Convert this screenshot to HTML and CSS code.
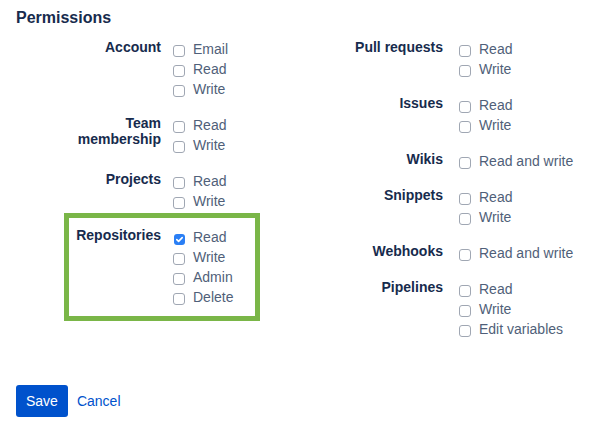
FILE: index.html
```html
<!DOCTYPE html>
<html>
<head>
<meta charset="utf-8">
<link rel="stylesheet" href="styles.css">
</head>
<body>
<div class="page">
  <h2 class="title">Permissions</h2>
  <div class="columns">
    <div class="col col-left">
      <div class="group">
        <div class="label">Account</div>
        <div class="opts">
          <div class="opt"><span class="cb"></span><span>Email</span></div>
          <div class="opt"><span class="cb"></span><span>Read</span></div>
          <div class="opt"><span class="cb"></span><span>Write</span></div>
        </div>
      </div>
      <div class="group">
        <div class="label">Team<br>membership</div>
        <div class="opts">
          <div class="opt"><span class="cb"></span><span>Read</span></div>
          <div class="opt"><span class="cb"></span><span>Write</span></div>
        </div>
      </div>
      <div class="group">
        <div class="label">Projects</div>
        <div class="opts">
          <div class="opt"><span class="cb"></span><span>Read</span></div>
          <div class="opt"><span class="cb"></span><span>Write</span></div>
        </div>
      </div>
      <div class="group highlighted">
        <div class="label">Repositories</div>
        <div class="opts">
          <div class="opt"><span class="cb checked"><svg viewBox="0 0 11 11" width="11" height="11"><path d="M2.8 5.6 L4.6 7.4 L8.2 3.6" fill="none" stroke="#fff" stroke-width="1.6" stroke-linecap="round" stroke-linejoin="round"/></svg></span><span>Read</span></div>
          <div class="opt"><span class="cb"></span><span>Write</span></div>
          <div class="opt"><span class="cb"></span><span>Admin</span></div>
          <div class="opt"><span class="cb"></span><span>Delete</span></div>
        </div>
      </div>
    </div>
    <div class="col col-right">
      <div class="group">
        <div class="label">Pull requests</div>
        <div class="opts">
          <div class="opt"><span class="cb"></span><span>Read</span></div>
          <div class="opt"><span class="cb"></span><span>Write</span></div>
        </div>
      </div>
      <div class="group">
        <div class="label">Issues</div>
        <div class="opts">
          <div class="opt"><span class="cb"></span><span>Read</span></div>
          <div class="opt"><span class="cb"></span><span>Write</span></div>
        </div>
      </div>
      <div class="group">
        <div class="label">Wikis</div>
        <div class="opts">
          <div class="opt"><span class="cb"></span><span>Read and write</span></div>
        </div>
      </div>
      <div class="group">
        <div class="label">Snippets</div>
        <div class="opts">
          <div class="opt"><span class="cb"></span><span>Read</span></div>
          <div class="opt"><span class="cb"></span><span>Write</span></div>
        </div>
      </div>
      <div class="group">
        <div class="label">Webhooks</div>
        <div class="opts">
          <div class="opt"><span class="cb"></span><span>Read and write</span></div>
        </div>
      </div>
      <div class="group">
        <div class="label">Pipelines</div>
        <div class="opts">
          <div class="opt"><span class="cb"></span><span>Read</span></div>
          <div class="opt"><span class="cb"></span><span>Write</span></div>
          <div class="opt"><span class="cb"></span><span>Edit variables</span></div>
        </div>
      </div>
    </div>
  </div>
  <div class="actions">
    <button class="btn-primary">Save</button>
    <a class="btn-link">Cancel</a>
  </div>
</div>
</body>
</html>
```

FILE: styles.css
```css
html, body {
  margin: 0;
  padding: 0;
  background: #ffffff;
}
body {
  font-family: "Liberation Sans", Arial, sans-serif;
  font-size: 14px;
  color: #172b4d;
}
.page {
  padding: 8px 16px 0 16px;
}
.title {
  margin: 0;
  font-size: 16px;
  line-height: 20px;
  font-weight: bold;
  color: #172b4d;
}
.columns {
  display: flex;
  margin-top: 11px;
}
.col {
  display: flex;
  flex-direction: column;
  gap: 16px;
}
.col-left {
  width: 284px;
  --lw: 145px;
  --lg: 12px;
}
.col-right {
  --lw: 143px;
  --lg: 16px;
}
.group {
  display: grid;
  grid-template-columns: var(--lw) auto;
  column-gap: var(--lg);
}
.label {
  text-align: right;
  font-weight: bold;
  line-height: 16px;
  color: #172b4d;
}
.opts {
  display: flex;
  flex-direction: column;
}
.opt {
  display: flex;
  align-items: flex-start;
  height: 20px;
  line-height: 20px;
  color: #505f79;
}
.cb {
  box-sizing: border-box;
  width: 12px;
  height: 12px;
  margin-top: 6px;
  margin-right: 8px;
  border: 1px solid #a0a7b3;
  border-radius: 3px;
  background: #fff;
  flex: none;
  display: flex;
}
.cb.checked {
  border: none;
  background: #2a7ff5;
  width: 11px;
  height: 11px;
  margin-top: 7px;
  margin-left: 1px;
  margin-right: 8px;
}
.cb svg {
  display: block;
}
.highlighted {
  position: relative;
}
.highlighted::before {
  content: "";
  position: absolute;
  top: -14px;
  bottom: -14px;
  left: 48px;
  right: 40px;
  border: 5px solid #7ab648;
  pointer-events: none;
}
.actions {
  display: flex;
  align-items: center;
  gap: 9px;
  margin-top: 46px;
}
.btn-primary {
  height: 32px;
  padding: 0 10px;
  border: none;
  border-radius: 3px;
  background: #0052cc;
  color: #ffffff;
  font-family: "Liberation Sans", Arial, sans-serif;
  font-size: 14px;
  line-height: 32px;
}
.btn-link {
  color: #0052cc;
  font-size: 14px;
  line-height: 32px;
  text-decoration: none;
}
```
